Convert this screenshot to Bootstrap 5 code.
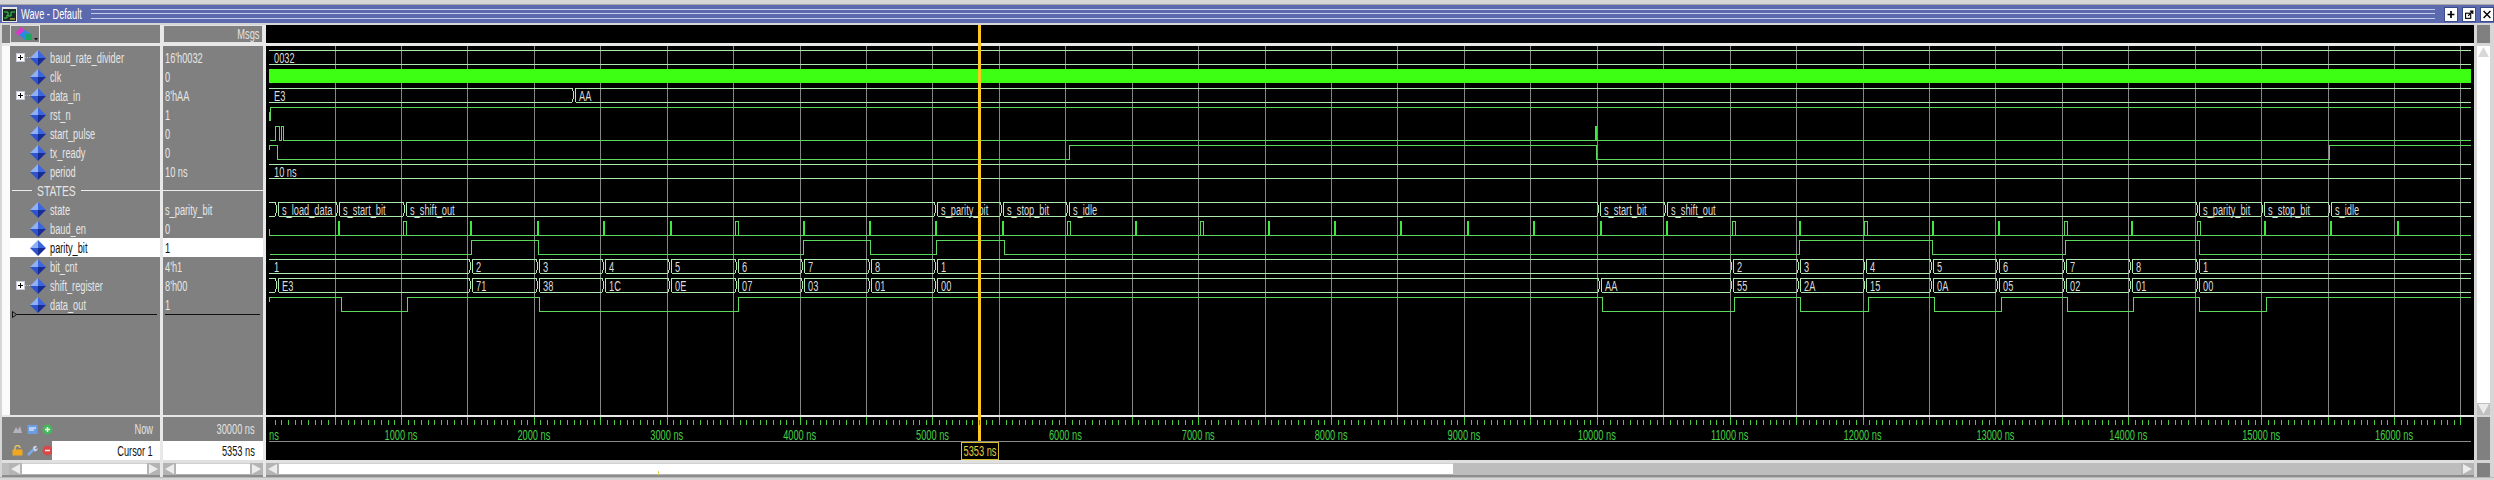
<!DOCTYPE html>
<html lang="en">
<head>
<meta charset="utf-8">
<title>Wave - Default</title>
<link href="https://cdn.jsdelivr.net/npm/bootstrap@5.3.0/dist/css/bootstrap.min.css" rel="stylesheet">
<style>
html,body{margin:0;width:2494px;height:480px;overflow:hidden;background:#d6d6d6;font-family:"Liberation Sans",Arial,sans-serif;font-size:14px;line-height:1}
.top-strip{height:5px;background:#d6d6d6;border-bottom:1px solid #a8a8a8}
.title-bar{height:18px;background:#5b69ae;color:#fff;padding-left:2px}
.title-ico{width:15px;height:15px;flex:none}
.title-txt{width:66px;margin-left:4px;font-size:14px}
.grip{flex:1;height:10px;margin:0 5px 0 4px;border-top:1px solid #c6cde8;border-bottom:1px solid #c6cde8;position:relative}
.grip-mid{height:1px;background:#c6cde8;margin-top:3px}
.win-btn{width:14px;height:15px;background:#fff;border:1px solid #3e4a86;margin-left:4px;flex:none}
.title-gap{height:2px;background:#d6d6d6}
.main{height:452px}
.col-name{width:158px;margin-left:2px}
.col-val{width:100px}
.col-gap{width:3px;background:#e8e8e8;flex:none}
.col-wave{width:2208px;position:relative}
.col-v{width:13px;margin-left:3px}
.gray{background:#808080}
.head-row{height:18px}
.head-btn{width:30px;margin-left:8px;height:18px;border:1px solid #dedede;border-right-color:#e6e6e6}
.head-val{height:18px;border:1px solid #e4e4e4;padding-right:3px;color:#e2e2e2}
.sep-h{height:3px;background:#e8e8e8}
.sep-b{height:2px;background:#e8e8e8}
.list-pane{height:369px;padding-top:2px;background:#808080}
.col-name .list-pane{border-left:8px solid #fbfbfb}
.rw{height:19px;color:#e6e6e6;white-space:nowrap;overflow:hidden}
.rw-on{background:#fff;color:#111;margin-top:0}
.slot{width:20px;flex:none;padding-left:6px}
.plus{width:14px;height:9px;display:block}
.dia{width:16px;height:16px;flex:none}
.nm{margin-left:4px}
.sq{display:inline-block;transform:scaleX(.66);transform-origin:left center;white-space:nowrap}
.sq-r{display:inline-block;transform:scaleX(.66);transform-origin:right center;white-space:nowrap}
.val{padding-left:2px}
.hline{height:1px;background:#ececec}
.st-l{width:20px;margin-left:2px}
.st-t{width:44px;margin-left:5px;transform:scaleX(.74);transform-origin:left center;color:#e6e6e6;display:inline-block}
.st-r{flex:1}
.end-a{height:1px;background:#111;margin-left:2px;margin-right:3px;position:relative}
.end-b{height:1px;background:#111;margin:0 3px 0 2px}
.tri{position:absolute;left:0;top:-3px;width:5px;height:7px}
.now-row{height:24px;padding-right:7px;color:#e2e2e2}
.cur-row{height:19px}
.cur-lab{flex:1;background:#fff;color:#111;padding-right:7px;height:19px}
.ico-set{width:50px;padding-left:10px;gap:4px;flex:none}
.ico{width:11px;height:11px;flex:none}
.val-now{height:24px;padding-right:8px;color:#e2e2e2}
.val-cur{height:19px;padding-right:8px;background:#fff;color:#111}
.sep-c{height:3px;background:#e0e0e0}
.sb{height:12px;background:#bdbdbd}
.sb-under{height:2px;background:#8c8c8c}
.sb-a{width:13px;flex:none;height:12px;background:#b4b4b4;display:block}
.sb-t{background:#fff;border-top:1px solid #d0d0d0;border-bottom:1px solid #b0b0b0}
.sb-t1{width:1174px;flex:none}
.sb-mark{width:1px;height:4px;background:#e4d24a;margin:7px 0 0 379px;display:block}
.sb-rest{background:#bdbdbd;flex:1}
.wave-head{height:18px;background:#000}
.wave-svg{display:block;background:#000}
.wave-svg path{shape-rendering:crispEdges}
.cursor-bar{position:absolute;left:712px;top:0;width:3px;height:416px;background:#ffc81e}
.cursor-tick{position:absolute;left:1px;top:395px;width:1px;height:5px;background:#d8322a}
.v-top{height:18px;background:#808080}
.v-track{height:369px;background:#fff}
.v-a{display:block;width:13px;height:12px}
.v-gap{height:3px;background:#d6d6d6}
.v-bot{height:43px;background:#808080}
.v-bot2{height:14px;background:#808080}
.bottom-strip{height:3px;background:#d6d6d6;border-top:1px solid #b8b8b8}
</style>
</head>
<body>
<svg width="0" height="0" class="position-absolute">
  <defs>
    <symbol id="dm" viewBox="0 0 16 16">
      <polygon points="8,0 0,8 8,8" fill="#8fb0f4"/>
      <polygon points="8,0 16,8 8,8" fill="#3c66dc"/>
      <polygon points="0,8 8,16 8,8" fill="#2f53c8"/>
      <polygon points="16,8 8,16 8,8" fill="#172c96"/>
    </symbol>
    <symbol id="pl" viewBox="0 0 14 9">
      <rect x="0.5" y="0.5" width="8" height="8" fill="#fff" stroke="#c8c8d8"/>
      <path d="M2 4.5H7M4.5 2V7" stroke="#000" stroke-width="1"/>
      <path d="M9 4.5H14" stroke="#c0c0c0" stroke-dasharray="1 1"/>
    </symbol>
    <symbol id="al" viewBox="0 0 13 12"><path d="M11 1V11L2 6Z" fill="#ececec"/></symbol>
    <symbol id="ar" viewBox="0 0 13 12"><path d="M2 1V11L11 6Z" fill="#ececec"/></symbol>
  </defs>
</svg>

<div class="top-strip"></div>
<div class="title-bar d-flex align-items-center">
  <svg class="title-ico" viewBox="0 0 15 15"><rect width="15" height="15" fill="#e8e8e8"/><rect x="1" y="2" width="13" height="12" fill="#1c2a26"/><path d="M2 5H6V9H9V5H13M2 11H5V8" fill="none" stroke="#39d353"/><path d="M8 12H13" stroke="#e8e04a"/></svg>
  <div class="title-txt"><span class="sq">Wave - Default</span></div>
  <div class="grip"><div class="grip-mid"></div></div>
  <svg class="win-btn" viewBox="0 0 14 15"><path d="M3 7.5H11M7 3.5V11.5" stroke="#000" stroke-width="2"/></svg>
  <svg class="win-btn" viewBox="0 0 14 15"><rect x="3" y="6" width="6" height="6" fill="none" stroke="#000" stroke-width="1.3"/><path d="M6 9L11 4M8 3.5H11.5V7" fill="none" stroke="#000" stroke-width="1.3"/></svg>
  <svg class="win-btn" viewBox="0 0 14 15"><path d="M3 3.5L11 11.5M11 3.5L3 11.5" stroke="#000" stroke-width="1.6"/></svg>
</div>
<div class="title-gap"></div>

<div class="main d-flex">
  <!-- names -->
  <div class="col-name d-flex flex-column">
    <div class="head-row gray">
      <div class="head-btn d-flex align-items-center justify-content-center">
        <svg width="26" height="16" viewBox="0 0 26 16"><polygon points="9,1 16,7 9,11 3,7" fill="#d838c8"/><polygon points="13,4 20,9 13,14 7,9" fill="#2a8ae0"/><rect x="14" y="8" width="6" height="6" fill="#18a860"/><path d="M22 12H26L24 14.5Z" fill="#111"/></svg>
      </div>
    </div>
    <div class="sep-h"></div>
    <div class="list-pane">
      <div class="rw d-flex align-items-center"><div class="slot"><svg class="plus"><use href="#pl"/></svg></div><svg class="dia"><use href="#dm"/></svg><div class="nm"><span class="sq">baud_rate_divider</span></div></div>
      <div class="rw d-flex align-items-center"><div class="slot"></div><svg class="dia"><use href="#dm"/></svg><div class="nm"><span class="sq">clk</span></div></div>
      <div class="rw d-flex align-items-center"><div class="slot"><svg class="plus"><use href="#pl"/></svg></div><svg class="dia"><use href="#dm"/></svg><div class="nm"><span class="sq">data_in</span></div></div>
      <div class="rw d-flex align-items-center"><div class="slot"></div><svg class="dia"><use href="#dm"/></svg><div class="nm"><span class="sq">rst_n</span></div></div>
      <div class="rw d-flex align-items-center"><div class="slot"></div><svg class="dia"><use href="#dm"/></svg><div class="nm"><span class="sq">start_pulse</span></div></div>
      <div class="rw d-flex align-items-center"><div class="slot"></div><svg class="dia"><use href="#dm"/></svg><div class="nm"><span class="sq">tx_ready</span></div></div>
      <div class="rw d-flex align-items-center"><div class="slot"></div><svg class="dia"><use href="#dm"/></svg><div class="nm"><span class="sq">period</span></div></div>
      <div class="rw d-flex align-items-center"><div class="hline st-l"></div><div class="st-t">STATES</div><div class="hline st-r"></div></div>
      <div class="rw d-flex align-items-center"><div class="slot"></div><svg class="dia"><use href="#dm"/></svg><div class="nm"><span class="sq">state</span></div></div>
      <div class="rw d-flex align-items-center"><div class="slot"></div><svg class="dia"><use href="#dm"/></svg><div class="nm"><span class="sq">baud_en</span></div></div>
      <div class="rw rw-on d-flex align-items-center"><div class="slot"></div><svg class="dia"><use href="#dm"/></svg><div class="nm"><span class="sq">parity_bit</span></div></div>
      <div class="rw d-flex align-items-center"><div class="slot"></div><svg class="dia"><use href="#dm"/></svg><div class="nm"><span class="sq">bit_cnt</span></div></div>
      <div class="rw d-flex align-items-center"><div class="slot"><svg class="plus"><use href="#pl"/></svg></div><svg class="dia"><use href="#dm"/></svg><div class="nm"><span class="sq">shift_register</span></div></div>
      <div class="rw d-flex align-items-center"><div class="slot"></div><svg class="dia"><use href="#dm"/></svg><div class="nm"><span class="sq">data_out</span></div></div>
      <div class="end-a"><svg class="tri" viewBox="0 0 5 7"><path d="M0.5 0.5L4.5 3.5L0.5 6.5Z" fill="#808080" stroke="#111"/></svg></div>
    </div>
    <div class="sep-b"></div>
    <div class="now-row gray d-flex align-items-center">
      <div class="ico-set d-flex align-items-center">
        <svg class="ico" viewBox="0 0 11 11"><path d="M1 9L4 3L6 6L8 2L10 9Z" fill="#b4b4c0"/></svg>
        <svg class="ico" viewBox="0 0 11 11"><rect x="0.5" y="1" width="10" height="9" fill="#6e9ce0"/><path d="M2 4H9M2 6H7" stroke="#fff"/></svg>
        <svg class="ico" viewBox="0 0 11 11"><circle cx="5.5" cy="5.5" r="5" fill="#46b85c"/><path d="M3 5.5H8M5.5 3V8" stroke="#e8ffe8" stroke-width="1.5"/></svg>
      </div>
      <div class="flex-grow-1 text-end"><span class="sq-r">Now</span></div>
    </div>
    <div class="cur-row gray d-flex align-items-center">
      <div class="ico-set d-flex align-items-center">
        <svg class="ico" viewBox="0 0 11 11"><rect x="0.5" y="4.5" width="10" height="6" fill="#f0a820"/><path d="M3 5V3A2.5 2.5 0 0 1 8 3" fill="none" stroke="#e8c860" stroke-width="1.3"/></svg>
        <svg class="ico" viewBox="0 0 11 11"><path d="M1 10L7 4" stroke="#7fa8e8" stroke-width="2.5"/><path d="M6 2.5A2.5 2.5 0 0 1 10 1.5L8 3.5L9 4.5L10.5 3A2.5 2.5 0 0 1 7 6Z" fill="#c8d4e8"/></svg>
        <svg class="ico" viewBox="0 0 11 11"><circle cx="5.5" cy="5.5" r="5" fill="#d84848"/><path d="M3 5.5H8" stroke="#ffe8e8" stroke-width="1.5"/></svg>
      </div>
      <div class="cur-lab d-flex align-items-center justify-content-end"><span class="sq-r">Cursor 1</span></div>
    </div>
    <div class="sep-c"></div>
    <div class="sb d-flex"><svg class="sb-a ms-2"><use href="#al"/></svg><div class="sb-t flex-grow-1"></div><svg class="sb-a"><use href="#ar"/></svg></div>
    <div class="sb-under"></div>
  </div>
  <div class="col-gap"></div>

  <!-- values -->
  <div class="col-val d-flex flex-column">
    <div class="head-val gray d-flex align-items-center justify-content-end"><span class="sq-r">Msgs</span></div>
    <div class="sep-h"></div>
    <div class="list-pane">
      <div class="rw val d-flex align-items-center"><span class="sq">16'h0032</span></div>
      <div class="rw val d-flex align-items-center"><span class="sq">0</span></div>
      <div class="rw val d-flex align-items-center"><span class="sq">8'hAA</span></div>
      <div class="rw val d-flex align-items-center"><span class="sq">1</span></div>
      <div class="rw val d-flex align-items-center"><span class="sq">0</span></div>
      <div class="rw val d-flex align-items-center"><span class="sq">0</span></div>
      <div class="rw val d-flex align-items-center"><span class="sq">10 ns</span></div>
      <div class="rw d-flex align-items-center"><div class="hline w-100"></div></div>
      <div class="rw val d-flex align-items-center"><span class="sq">s_parity_bit</span></div>
      <div class="rw val d-flex align-items-center"><span class="sq">0</span></div>
      <div class="rw rw-on val d-flex align-items-center"><span class="sq">1</span></div>
      <div class="rw val d-flex align-items-center"><span class="sq">4'h1</span></div>
      <div class="rw val d-flex align-items-center"><span class="sq">8'h00</span></div>
      <div class="rw val d-flex align-items-center"><span class="sq">1</span></div>
      <div class="end-b"></div>
    </div>
    <div class="sep-b"></div>
    <div class="val-now gray d-flex align-items-center justify-content-end"><span class="sq-r">30000 ns</span></div>
    <div class="val-cur d-flex align-items-center justify-content-end"><span class="sq-r">5353 ns</span></div>
    <div class="sep-c"></div>
    <div class="sb d-flex"><svg class="sb-a"><use href="#al"/></svg><div class="sb-t flex-grow-1"></div><svg class="sb-a"><use href="#ar"/></svg></div>
    <div class="sb-under"></div>
  </div>
  <div class="col-gap"></div>

  <!-- waves -->
  <div class="col-wave d-flex flex-column">
    <div class="wave-head"></div>
    <div class="sep-h"></div>
    <svg id="wv" class="wave-svg" width="2208" height="369"></svg>
    <div class="sep-b"></div>
    <svg id="rl" class="wave-svg" width="2208" height="43"></svg>
    <div class="sep-c"></div>
    <div class="sb d-flex"><svg class="sb-a"><use href="#al"/></svg><div class="sb-t sb-t1"><span class="sb-mark"></span></div><div class="sb-rest"></div><svg class="sb-a"><use href="#ar"/></svg></div>
    <div class="sb-under"></div>
    <div class="cursor-bar"><div class="cursor-tick"></div></div>
  </div>

  <!-- vertical scrollbar -->
  <div class="col-v d-flex flex-column">
    <div class="v-top"></div>
    <div class="v-gap"></div>
    <div class="v-track d-flex flex-column justify-content-between">
      <svg class="v-a" viewBox="0 0 13 12"><path d="M1 11H12L6.5 1Z" fill="#d8d8d8"/></svg>
      <svg class="v-a" viewBox="0 0 13 12"><rect width="13" height="12" fill="#c0c0c0"/><path d="M1 1H12L6.5 11Z" fill="#ececec"/></svg>
    </div>
    <div class="v-gap" style="height:2px"></div>
    <div class="v-bot"></div>
    <div class="v-gap"></div>
    <div class="v-bot2"></div>
  </div>
</div>
<div class="bottom-strip"></div>

<script>
(function(){
  var X=function(x){return x-266}, Y=function(y){return y-46};
  var XL=2471, XS=270, o=[];
  var SIG='#5cd85c', BUS='#aeeaae', TXT='#dcdcdc';
  function T(x,y,s,fill,anchor){return '<text transform="translate('+x+','+y+') scale(.66,1)" font-family="Liberation Sans" font-size="14" fill="'+fill+'"'+(anchor?' text-anchor="middle"':'')+'>'+s+'</text>';}
  for(var t=500;t<=16500;t+=500){var gx=Math.round(X(268.1+.13287*t))+.5;o.push('<path d="M'+gx+' 0V369" stroke="#868686"/>');}
  function sig(pts){o.push('<path d="'+pts+'" fill="none" stroke="'+SIG+'" stroke-width="1"/>');}
  function levels(hi,lo,start,edges){
    var d='M'+X(XS)+' '+Y(start?hi:lo),lev=start;
    edges.forEach(function(e){lev=!lev;d+='H'+X(e)+'V'+Y(lev?hi:lo);});
    return d+'H'+X(XL);
  }
  function bus(i,segs){
    var a=50+19*i,b=a+14;
    segs.forEach(function(s,k){
      var l=s[0],last=k==segs.length-1,r=last?XL:segs[k+1][0],first=k==0;
      var L=first?l:l+2,R=last?r:r-2;
      var d='M'+X(L)+' '+Y(a)+'H'+X(R);
      if(!last)d+='L'+X(r-1)+' '+Y(a+3)+'V'+Y(b-3)+'L'+X(R)+' '+Y(b);
      d+=(last?'M'+X(R)+' '+Y(b):'')+'H'+X(L);
      if(!first)d+='L'+X(l+1)+' '+Y(b-3)+'V'+Y(a+3)+'L'+X(L)+' '+Y(a);
      o.push('<path d="'+d+'" fill="none" stroke="'+BUS+'"/>');
      if(s[1]){o.push(T(X(l+5),Y(a+12.5),s[1],TXT));}
    });
  }
  bus(0,[[269,'0032']]);
  o.push('<rect x="'+X(269)+'" y="'+Y(69)+'" width="2202" height="14" fill="#3cff14"/>');
  bus(2,[[269,'E3'],[574,'AA']]);
  sig('M'+X(270.5)+' '+Y(121)+'V'+Y(107)+'H'+X(XL));
  o.push('<rect x="'+X(269)+'" y="'+Y(112)+'" width="2" height="9" fill="'+SIG+'"/>');
  sig('M'+X(270)+' '+Y(140)+'H'+X(275)+'V'+Y(126)+'H'+X(279)+'V'+Y(140)+'H'+X(281.5)+'V'+Y(126)+'H'+X(283.5)+'V'+Y(140)+'H'+X(XL));
  o.push('<rect x="'+X(1595)+'" y="'+Y(126)+'" width="2" height="14" fill="#3fe83f"/>');
  sig('M'+X(269.5)+' '+Y(150)+'V'+Y(145)+'H'+X(277)+'V'+Y(159)+'H'+X(1069)+'V'+Y(145)+'H'+X(1596)+'V'+Y(159)+'H'+X(2329)+'V'+Y(145)+'H'+X(XL));
  bus(6,[[269,'10 ns']]);
  bus(8,[[269,''],[277,'s_load_data'],[338,'s_start_bit'],[405,'s_shift_out'],[936,'s_parity_bit'],[1002,'s_stop_bit'],[1068,'s_idle'],[1599,'s_start_bit'],[1666,'s_shift_out'],[2198,'s_parity_bit'],[2263,'s_stop_bit'],[2330,'s_idle']]);
  sig('M'+X(269.5)+' '+Y(229)+'V'+Y(235)+'H'+X(XL));
  var dbl={1:1,6:1,11:1,13:1,21:1,23:1,26:1,28:1};
  for(var k=0;k<32;k++){
    var px=Math.round(338.5+66.43*k);
    if(dbl[k]){o.push('<path d="M'+X(px-1.5)+' '+Y(235)+'V'+Y(221.5)+'H'+X(px+1.5)+'V'+Y(235)+'" fill="none" stroke="'+SIG+'"/>');}
    else{o.push('<rect x="'+X(px-1)+'" y="'+Y(221)+'" width="2" height="14" fill="#3fe83f"/>');}
  }
  sig(levels(240,254,false,[471,538,803,870,936,1004,1799,1932,2065,2199]));
  bus(11,[[269,'1'],[471,'2'],[538,'3'],[604,'4'],[670,'5'],[737,'6'],[803,'7'],[870,'8'],[936,'1'],[1732,'2'],[1799,'3'],[1865,'4'],[1932,'5'],[1998,'6'],[2065,'7'],[2131,'8'],[2198,'1']]);
  bus(12,[[269,''],[277,'E3'],[471,'71'],[538,'38'],[604,'1C'],[670,'0E'],[737,'07'],[803,'03'],[870,'01'],[936,'00'],[1600,'AA'],[1732,'55'],[1799,'2A'],[1865,'15'],[1932,'0A'],[1998,'05'],[2065,'02'],[2131,'01'],[2198,'00']]);
  sig(levels(297,311,true,[341,407,539,738,1602,1734,1800,1868,1934,2001,2067,2133,2199,2266]));
  o.push('<path d="M'+X(269.5)+' '+Y(297)+'V'+Y(302)+'" stroke="'+SIG+'"/>');
  document.getElementById('wv').innerHTML=o.join('');
  var r=[],Yr=function(y){return y-417};
  for(var n=1;n*50<=16500;n++){
    var tx=Math.round(X(268.1+.13287*50*n))+.5, major=n%10==0;
    r.push('<path d="M'+tx+' '+Yr(major?417:420)+'V'+Yr(425)+'" stroke="#4ccb3c"/>');
  }
  r.push('<path d="M'+X(269)+' '+Yr(441.5)+'H'+X(XL)+'" stroke="#8a8a8a"/>');
  r.push(T(X(269),Yr(440),'ns','#45d045'));
  for(var m=1;m<=16;m++){r.push(T(X(268.1+132.87*m),Yr(440),m*1000+' ns','#45d045',true));}
  r.push('<rect x="'+X(961.5)+'" y="'+Yr(442.5)+'" width="37" height="17" fill="#000" stroke="#d9c02a"/>');
  r.push(T(X(980),Yr(456),'5353 ns','#e6cc38',true));
  document.getElementById('rl').innerHTML=r.join('');
})();
</script>
<script src="https://cdn.jsdelivr.net/npm/bootstrap@5.3.0/dist/js/bootstrap.bundle.min.js"></script>
</body>
</html>
